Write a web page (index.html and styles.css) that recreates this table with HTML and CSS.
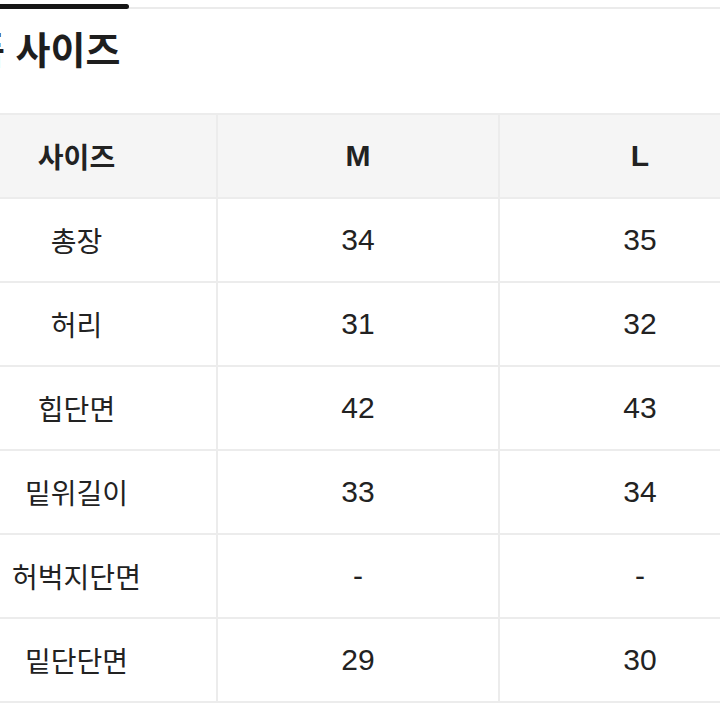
FILE: index.html
```html
<!DOCTYPE html>
<html lang="ko">
<head>
<meta charset="utf-8">
<title>상품 사이즈</title>
<link rel="stylesheet" href="styles.css">
</head>
<body>
<div class="page">
  <div class="tabbar"><div class="tab-indicator"></div></div>
  <h2 class="title">상품 사이즈</h2>
  <table class="size-table">
    <colgroup><col class="c1"><col class="c2"><col class="c3"></colgroup>
    <thead>
      <tr><th class="ko">사이즈</th><th class="en">M</th><th class="en">L</th></tr>
    </thead>
    <tbody>
      <tr><td class="ko">총장</td><td class="num">34</td><td class="num">35</td></tr>
      <tr><td class="ko">허리</td><td class="num">31</td><td class="num">32</td></tr>
      <tr><td class="ko">힙단면</td><td class="num">42</td><td class="num">43</td></tr>
      <tr><td class="ko">밑위길이</td><td class="num">33</td><td class="num">34</td></tr>
      <tr><td class="ko">허벅지단면</td><td class="num">-</td><td class="num">-</td></tr>
      <tr><td class="ko">밑단단면</td><td class="num">29</td><td class="num">30</td></tr>
    </tbody>
  </table>
</div>
</body>
</html>
```
FILE: styles.css
```css
html, body {
  margin: 0;
  padding: 0;
  background: #ffffff;
  overflow: hidden;
}
.page {
  width: 845px;
  margin-left: -65px;
  color: #222222;
  font-family: "Noto Sans CJK KR", "Liberation Sans", sans-serif;
}
.tabbar {
  height: 5px;
  padding-top: 4px;
  background: linear-gradient(to bottom, transparent 7px, #ebebeb 7px);
}
.tab-indicator {
  width: 194px;
  height: 5px;
  background: #151515;
  border-radius: 0 3px 3px 0;
}
.title {
  margin: 20px 0 46px 0;
  font-size: 38px;
  line-height: 38px;
  font-weight: 700;
  color: #1e1e1e;
}
.size-table {
  width: 845px;
  table-layout: fixed;
  border-collapse: collapse;
}
.c1 { width: 281px; }
.c2 { width: 282px; }
.c3 { width: 282px; }
.size-table th,
.size-table td {
  height: 82px;
  padding: 0;
  border: 2px solid #ececec;
  text-align: center;
  vertical-align: middle;
}
.size-table th {
  background: #f5f5f5;
  font-weight: 700;
}
.ko {
  font-family: "Noto Sans CJK KR", sans-serif;
  font-size: 28px;
}
.en, .num {
  font-family: "Liberation Sans", "Noto Sans CJK KR", sans-serif;
  font-size: 30px;
}
.size-table td.ko,
.size-table td.num {
  font-weight: 400;
}
```
